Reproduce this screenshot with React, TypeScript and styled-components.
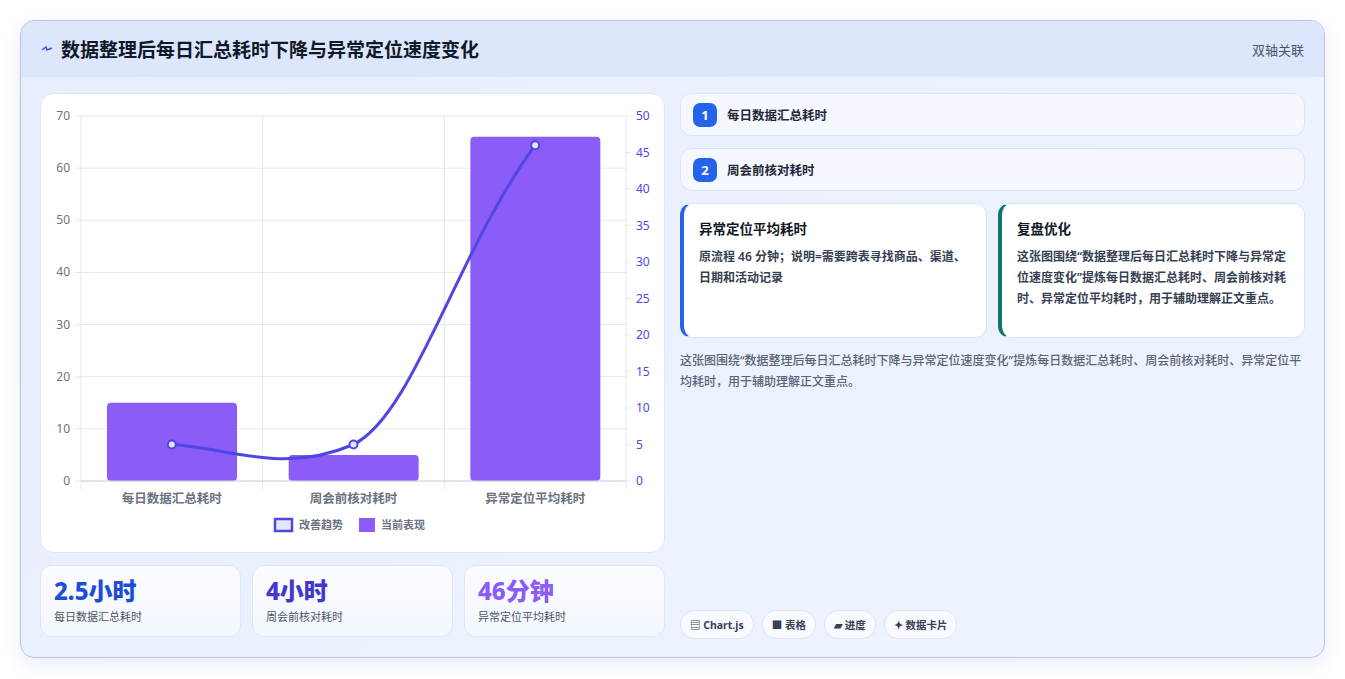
import React from 'react';
import styled, { createGlobalStyle } from 'styled-components';

const GlobalStyle = createGlobalStyle`
  body {
    margin: 0;
    background: #ffffff;
    font-family: 'Noto Sans', 'Noto Sans CJK SC', sans-serif;
  }
`;

const Page = styled.div`
  padding: 20px 20px 21px 20px;
  height: 679px;
  box-sizing: border-box;
`;

const Frame = styled.div`
  height: 638px;
  box-sizing: border-box;
  border: 1px solid #b9c4ec;
  border-radius: 14px;
  overflow: hidden;
  display: flex;
  flex-direction: column;
  background: linear-gradient(135deg, #e8eefd 0%, #eef4fe 100%);
  box-shadow: 0 6px 18px rgba(80, 100, 180, 0.12);
`;

const Header = styled.div`
  height: 56px;
  flex: none;
  display: flex;
  align-items: center;
  justify-content: space-between;
  padding: 0 20px 0 20px;
  background: #dce6fd;
`;

const Title = styled.h1`
  margin: 0;
  font-size: 19px;
  font-weight: 700;
  color: #111827;
  display: flex;
  align-items: center;
  gap: 8px;
`;

const HeaderTag = styled.span`
  font-size: 13px;
  color: #4b5563;
`;

const Body = styled.div`
  flex: 1;
  display: grid;
  grid-template-columns: 625px 625px;
  gap: 15px;
  padding: 16px 19px 18px 19px;
`;

const LeftCol = styled.div`
  display: flex;
  flex-direction: column;
  gap: 12px;
`;

const ChartCard = styled.div`
  height: 460px;
  background: #ffffff;
  border: 1px solid #dfe6f5;
  border-radius: 14px;
  box-sizing: border-box;
  overflow: hidden;
`;

const KpiRow = styled.div`
  display: grid;
  grid-template-columns: repeat(3, 1fr);
  gap: 11px;
`;

const Kpi = styled.div`
  height: 72px;
  box-sizing: border-box;
  background: linear-gradient(180deg, #fbfcff, #f3f7ff);
  border: 1px solid #dfe6f5;
  border-radius: 12px;
  padding: 10px 13px;
`;

const KpiValue = styled.div<{ $color: string }>`
  font-size: 24px;
  font-weight: 800;
  line-height: 30px;
  color: ${p => p.$color};
`;

const KpiLabel = styled.div`
  font-size: 11px;
  color: #4b5563;
  margin-top: 2px;
`;

const RightCol = styled.div`
  display: flex;
  flex-direction: column;
  gap: 12px;
`;

const Step = styled.div`
  height: 43px;
  box-sizing: border-box;
  display: flex;
  align-items: center;
  gap: 10px;
  padding: 0 12px;
  background: #f5f8ff;
  border: 1px solid #dbe4f7;
  border-radius: 12px;
  font-size: 12.5px;
  font-weight: 600;
  color: #1f2937;
`;

const StepNum = styled.span`
  width: 24px;
  height: 24px;
  border-radius: 7px;
  background: #2563eb;
  color: #fff;
  font-size: 13px;
  font-weight: 700;
  display: flex;
  align-items: center;
  justify-content: center;
`;

const CardRow = styled.div`
  display: grid;
  grid-template-columns: 1fr 1fr;
  gap: 11px;
`;

const NoteCard = styled.div<{ $accent: string }>`
  height: 135px;
  box-sizing: border-box;
  background: #ffffff;
  border: 1px solid #dbe4f7;
  border-left: 4px solid ${p => p.$accent};
  border-radius: 12px;
  padding: 14px 14px 0 15px;
`;

const NoteTitle = styled.div`
  font-size: 13.5px;
  font-weight: 700;
  color: #111827;
  margin-bottom: 8px;
`;

const NoteText = styled.div`
  font-size: 12px;
  font-weight: 600;
  line-height: 21px;
  color: #374151;
`;

const Para = styled.p`
  margin: 0;
  font-size: 12px;
  font-weight: 500;
  line-height: 21px;
  color: #5b6475;
  flex: 1;
`;

const Tags = styled.div`
  display: flex;
  gap: 8px;
`;

const Tag = styled.span`
  height: 27px;
  padding: 0 9px;
  display: flex;
  align-items: center;
  gap: 3px;
  background: #f8faff;
  border: 1px solid #dde5f5;
  border-radius: 14px;
  font-size: 10.5px;
  font-weight: 700;
  color: #374151;
`;

const grid = '#e3e8f0';
const L = 40, R = 585, T = 22, B = 387;
const yl = (v: number) => B - (v / 70) * (B - T);
const yr = (v: number) => B - (v / 50) * (B - T);
const cw = (R - L) / 3;
const cats = ['每日数据汇总耗时', '周会前核对耗时', '异常定位平均耗时'];
const bars = [15, 5, 66];

function Chart() {
  const pts = [5, 5, 46].map((v, i) => [L + cw * (i + 0.5), yr(v)]);
  return (
    <svg width="625" height="460" fontFamily="'Noto Sans','Noto Sans CJK SC',sans-serif">
      {[0, 10, 20, 30, 40, 50, 60, 70].map(v => (
        <g key={v}>
          <line x1={L - 6} x2={R} y1={yl(v)} y2={yl(v)} stroke={grid} />
          <text x={L - 11} y={yl(v) + 4} fontSize="12" fill="#6b7280" textAnchor="end">{v}</text>
        </g>
      ))}
      {[0, 5, 10, 15, 20, 25, 30, 35, 40, 45, 50].map(v => (
        <g key={v}>
          <line x1={R} x2={R + 5} y1={yr(v)} y2={yr(v)} stroke={grid} />
          <text x={R + 10} y={yr(v) + 4} fontSize="12" fill="#4f46e5">{v}</text>
        </g>
      ))}
      {[0, 1, 2, 3].map(i => (
        <line key={i} x1={L + cw * i} x2={L + cw * i} y1={T} y2={B + 8} stroke={grid} />
      ))}
      {bars.map((v, i) => (
        <rect key={i} x={L + cw * i + 26} y={yl(v)} width={130} height={B - yl(v)} rx="4" fill="#8b5cf6" />
      ))}
      <line x1={L} x2={R} y1={B} y2={B} stroke="#cfd5e2" />
      {cats.map((c, i) => (
        <text key={c} x={L + cw * (i + 0.5)} y={409} fontSize="12.5" fontWeight="600" fill="#6b7280" textAnchor="middle">{c}</text>
      ))}
      <path
        d={`M${pts[0][0]} ${pts[0][1]} C ${pts[0][0] + 60} ${pts[0][1] + 4}, ${pts[1][0] - 70} ${pts[1][1] + 30}, ${pts[1][0]} ${pts[1][1]} C ${pts[1][0] + 60} ${pts[1][1] - 30}, ${pts[2][0] - 80} ${pts[2][1] + 110}, ${pts[2][0]} ${pts[2][1]}`}
        fill="none" stroke="#4f46e5" strokeWidth="3"
      />
      {pts.map(([x, y], i) => (
        <circle key={i} cx={x} cy={y} r="4" fill="#e0e7ff" stroke="#4f46e5" strokeWidth="2" />
      ))}
      <rect x="234" y="425" width="17" height="12" fill="#e0e7ff" stroke="#4f46e5" strokeWidth="2.5" />
      <text x="258" y="435" fontSize="11" fontWeight="600" fill="#6b7280">改善趋势</text>
      <rect x="318" y="424" width="16" height="14" fill="#8b5cf6" />
      <text x="340" y="435" fontSize="11" fontWeight="600" fill="#6b7280">当前表现</text>
    </svg>
  );
}

export default function App() {
  return (
    <>
      <GlobalStyle />
      <Page>
        <Frame>
          <Header>
            <Title>
              <svg width="12" height="10" viewBox="0 0 12 10">
                <path d="M1 6 L5 3 L6 6 L11 4" fill="none" stroke="#4f46e5" strokeWidth="1.4" />
              </svg>
              数据整理后每日汇总耗时下降与异常定位速度变化
            </Title>
            <HeaderTag>双轴关联</HeaderTag>
          </Header>
          <Body>
            <LeftCol>
              <ChartCard><Chart /></ChartCard>
              <KpiRow>
                <Kpi><KpiValue $color="#1d4ed8">2.5小时</KpiValue><KpiLabel>每日数据汇总耗时</KpiLabel></Kpi>
                <Kpi><KpiValue $color="#4338ca">4小时</KpiValue><KpiLabel>周会前核对耗时</KpiLabel></Kpi>
                <Kpi><KpiValue $color="#8b5cf6">46分钟</KpiValue><KpiLabel>异常定位平均耗时</KpiLabel></Kpi>
              </KpiRow>
            </LeftCol>
            <RightCol>
              <Step><StepNum>1</StepNum>每日数据汇总耗时</Step>
              <Step><StepNum>2</StepNum>周会前核对耗时</Step>
              <CardRow>
                <NoteCard $accent="#2563eb">
                  <NoteTitle>异常定位平均耗时</NoteTitle>
                  <NoteText>原流程 46 分钟；说明=需要跨表寻找商品、渠道、日期和活动记录</NoteText>
                </NoteCard>
                <NoteCard $accent="#0f766e">
                  <NoteTitle>复盘优化</NoteTitle>
                  <NoteText>这张图围绕“数据整理后每日汇总耗时下降与异常定位速度变化”提炼每日数据汇总耗时、周会前核对耗时、异常定位平均耗时，用于辅助理解正文重点。</NoteText>
                </NoteCard>
              </CardRow>
              <Para>这张图围绕“数据整理后每日汇总耗时下降与异常定位速度变化”提炼每日数据汇总耗时、周会前核对耗时、异常定位平均耗时，用于辅助理解正文重点。</Para>
              <Tags>
                <Tag>▤ Chart.js</Tag>
                <Tag>■ 表格</Tag>
                <Tag>▰ 进度</Tag>
                <Tag>✦ 数据卡片</Tag>
              </Tags>
            </RightCol>
          </Body>
        </Frame>
      </Page>
    </>
  );
}
